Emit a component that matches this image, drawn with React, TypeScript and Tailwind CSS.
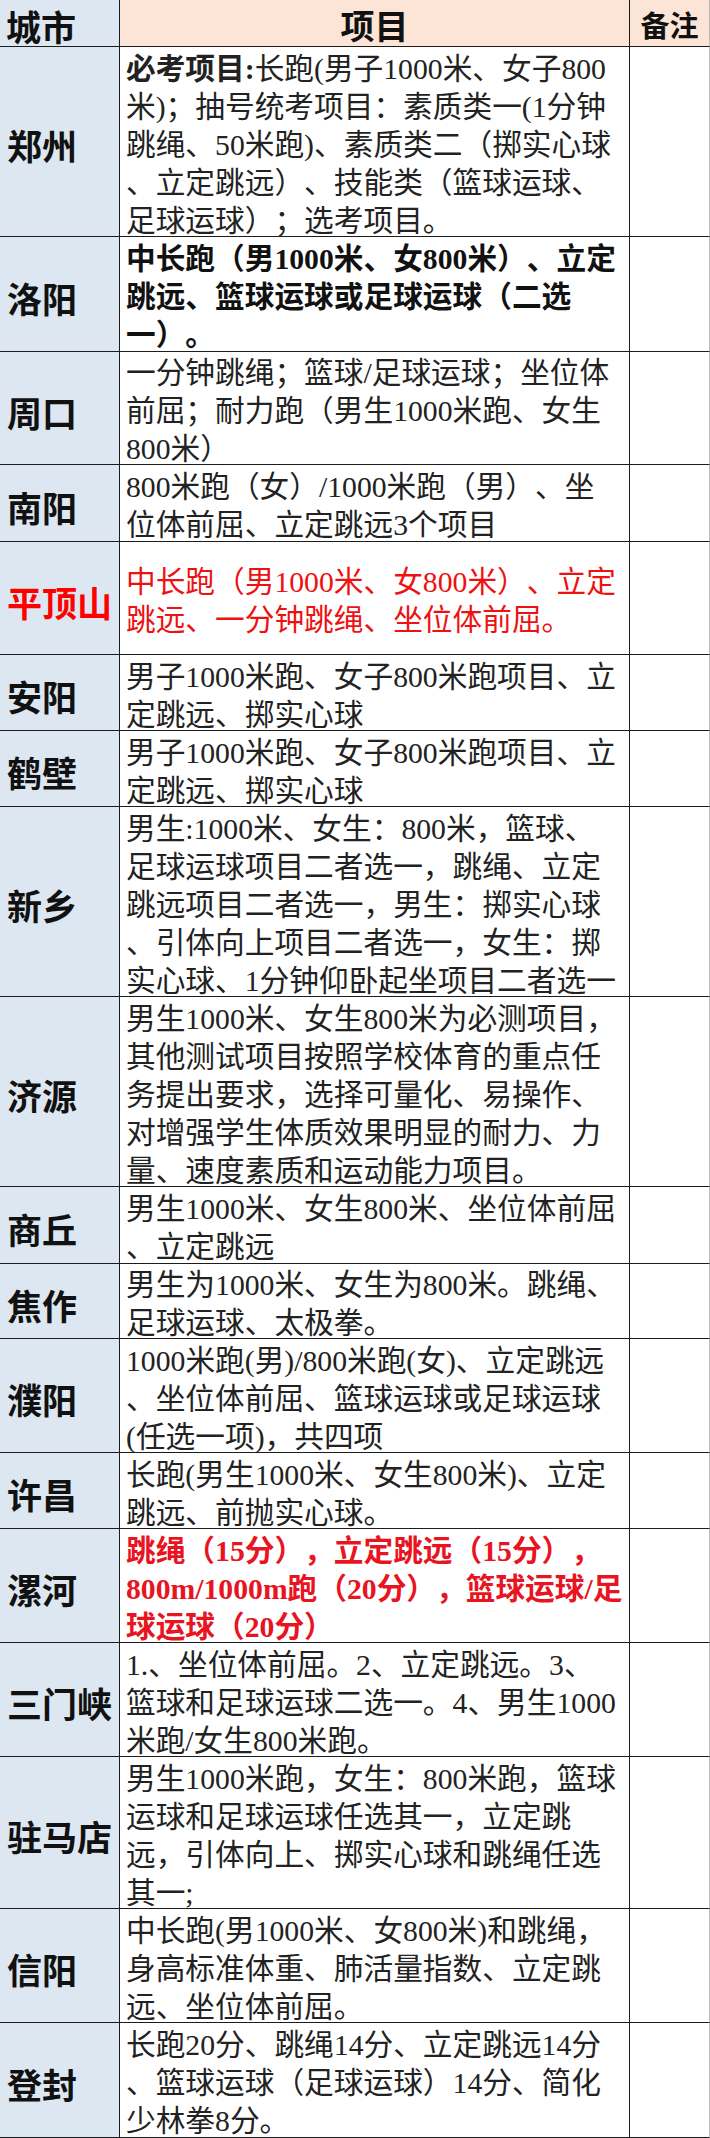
import React from "react";

type Row = {
  city: string;
  h: string;
  lines: React.ReactNode[];
  tone?: string;
  cityTone?: string;
};

const rows: Row[] = [
  {
    city: "郑州",
    h: "h-[190px]",
    lines: [
      <>
        <span className="font-bold">必考项目:</span>长跑(男子1000米、女子800
      </>,
      "米)；抽号统考项目：素质类一(1分钟",
      "跳绳、50米跑)、素质类二（掷实心球",
      "、立定跳远）、技能类（篮球运球、",
      "足球运球）；选考项目。",
    ],
  },
  {
    city: "洛阳",
    h: "h-[115px]",
    tone: "font-bold text-[#111]",
    lines: ["中长跑（男1000米、女800米）、立定", "跳远、篮球运球或足球运球（二选", "一）。"],
  },
  {
    city: "周口",
    h: "h-[113px]",
    lines: ["一分钟跳绳；篮球/足球运球；坐位体", "前屈；耐力跑（男生1000米跑、女生", "800米）"],
  },
  {
    city: "南阳",
    h: "h-[77px]",
    lines: ["800米跑（女）/1000米跑（男）、坐", "位体前屈、立定跳远3个项目"],
  },
  {
    city: "平顶山",
    h: "h-[113px]",
    tone: "text-[#ee1111]",
    cityTone: "text-[#ff0000]",
    lines: ["中长跑（男1000米、女800米）、立定", "跳远、一分钟跳绳、坐位体前屈。"],
  },
  {
    city: "安阳",
    h: "h-[76px]",
    lines: ["男子1000米跑、女子800米跑项目、立", "定跳远、掷实心球"],
  },
  {
    city: "鹤壁",
    h: "h-[76px]",
    lines: ["男子1000米跑、女子800米跑项目、立", "定跳远、掷实心球"],
  },
  {
    city: "新乡",
    h: "h-[190px]",
    lines: [
      "男生:1000米、女生：800米，篮球、",
      "足球运球项目二者选一，跳绳、立定",
      "跳远项目二者选一，男生：掷实心球",
      "、引体向上项目二者选一，女生：掷",
      "实心球、1分钟仰卧起坐项目二者选一",
    ],
  },
  {
    city: "济源",
    h: "h-[190px]",
    lines: [
      "男生1000米、女生800米为必测项目，",
      "其他测试项目按照学校体育的重点任",
      "务提出要求，选择可量化、易操作、",
      "对增强学生体质效果明显的耐力、力",
      "量、速度素质和运动能力项目。",
    ],
  },
  {
    city: "商丘",
    h: "h-[77px]",
    lines: ["男生1000米、女生800米、坐位体前屈", "、立定跳远"],
  },
  {
    city: "焦作",
    h: "h-[75px]",
    lines: ["男生为1000米、女生为800米。跳绳、", "足球运球、太极拳。"],
  },
  {
    city: "濮阳",
    h: "h-[114px]",
    lines: ["1000米跑(男)/800米跑(女)、立定跳远", "、坐位体前屈、篮球运球或足球运球", "(任选一项)，共四项"],
  },
  {
    city: "许昌",
    h: "h-[76px]",
    lines: ["长跑(男生1000米、女生800米)、立定", "跳远、前抛实心球。"],
  },
  {
    city: "漯河",
    h: "h-[114px]",
    tone: "font-bold text-[#e8141f]",
    lines: ["跳绳（15分），立定跳远（15分），", "800m/1000m跑（20分），篮球运球/足", "球运球（20分）"],
  },
  {
    city: "三门峡",
    h: "h-[114px]",
    lines: ["1.、坐位体前屈。2、立定跳远。3、", "篮球和足球运球二选一。4、男生1000", "米跑/女生800米跑。"],
  },
  {
    city: "驻马店",
    h: "h-[152px]",
    lines: [
      "男生1000米跑，女生：800米跑，篮球",
      "运球和足球运球任选其一，立定跳",
      "远，引体向上、掷实心球和跳绳任选",
      "其一;",
    ],
  },
  {
    city: "信阳",
    h: "h-[114px]",
    lines: ["中长跑(男1000米、女800米)和跳绳，", "身高标准体重、肺活量指数、立定跳", "远、坐位体前屈。"],
  },
  {
    city: "登封",
    h: "h-[115px]",
    lines: ["长跑20分、跳绳14分、立定跳远14分", "、篮球运球（足球运球）14分、简化", "少林拳8分。"],
  },
];

export default function App() {
  return (
    <div className="w-[710px] h-[2138px] overflow-hidden bg-white [text-spacing-trim:space-all]">
      {/* header */}
      <div className="grid grid-cols-[120px_510px_80px] h-[47px] [font-family:'Noto_Sans_CJK_SC',sans-serif] font-bold text-[#111]">
        <div className="bg-[#dde7f2] border-r border-b border-[#1c1c1c] flex items-center pl-[6px] pt-[4px] text-[35px] leading-none">
          城市
        </div>
        <div className="bg-[#fce5d7] border-r border-b border-[#1c1c1c] flex items-center justify-center pt-[4px] text-[34px] leading-none">
          项目
        </div>
        <div className="bg-[#fce5d7] border-r border-b border-r-[#bdbdbd] border-b-[#1c1c1c] flex items-center justify-center pt-[2px] text-[29px] leading-none">
          备注
        </div>
      </div>
      {rows.map((r) => (
        <div key={r.city} className={`grid grid-cols-[120px_510px_80px] ${r.h}`}>
          <div
            className={`bg-[#dde7f2] border-r border-b border-[#1c1c1c] flex items-center pl-[7px] pt-[6px] overflow-hidden whitespace-nowrap [font-family:'Noto_Sans_CJK_SC',sans-serif] font-bold text-[35px] leading-none ${
              r.cityTone ?? "text-[#111]"
            }`}
          >
            {r.city}
          </div>
          <div
            className={`border-r border-b border-[#1c1c1c] flex flex-col justify-center pl-[6px] pt-[6px] overflow-hidden whitespace-nowrap [font-family:'Liberation_Serif','Noto_Sans_CJK_SC',serif] text-[29.7px] leading-[38px] ${
              r.tone ?? "text-[#222]"
            }`}
          >
            {r.lines.map((l, i) => (
              <div key={i}>{l}</div>
            ))}
          </div>
          <div className="border-r border-b border-r-[#bdbdbd] border-b-[#1c1c1c] bg-white" />
        </div>
      ))}
    </div>
  );
}
